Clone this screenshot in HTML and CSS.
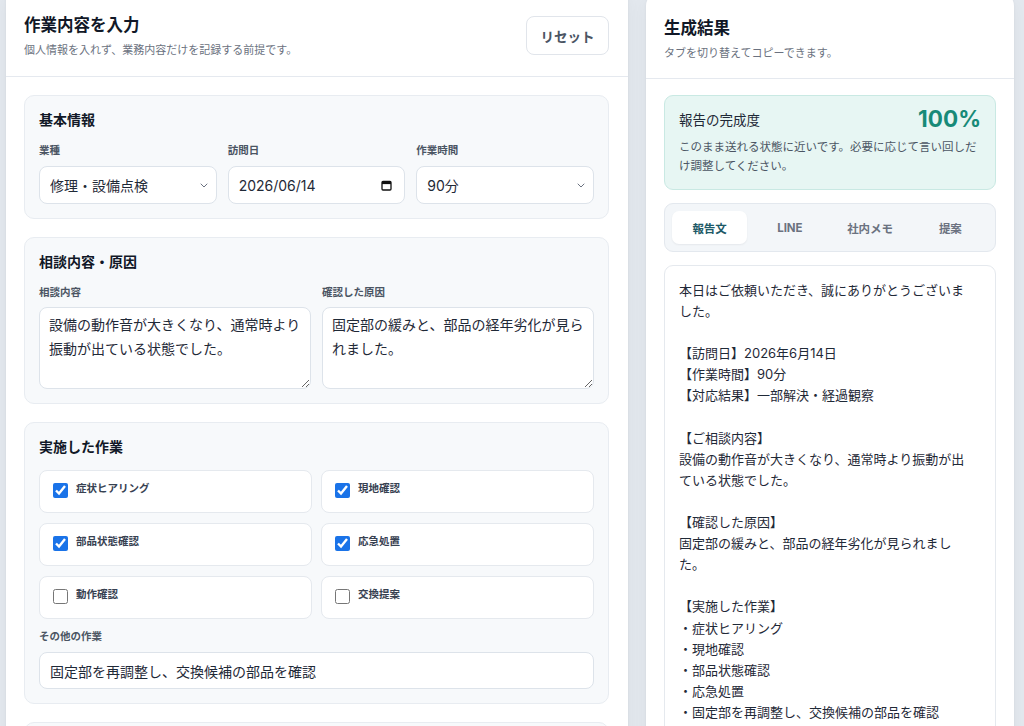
FILE: index.html
```html
<!DOCTYPE html>
<html lang="ja">
<head>
    <meta charset="UTF-8">
    <meta name="viewport" content="width=device-width, initial-scale=1.0">
    <title>作業報告ジェネレーター</title>
    <link rel="stylesheet" href="styles.css">
</head>
<body>

    <main class="layout">
        <section class="panel panel-input">
            <header class="panel-head">
                <div>
                    <h1>作業内容を入力</h1>
                    <p>個人情報を入れず、業務内容だけを記録する前提です。</p>
                </div>
                <button class="btn-reset">リセット</button>
            </header>

            <div class="panel-body">
                <div class="card">
                    <h2>基本情報</h2>
                    <div class="grid-3">
                        <div class="field">
                            <span class="field-label">業種</span>
                            <div class="select-wrap">
                                <select>
                                    <option>修理・設備点検</option>
                                </select>
                                <svg class="chevron" width="8" height="5" viewBox="0 0 8 5"><path d="M1 1l3 3 3-3" fill="none" stroke="#6b7280" stroke-width="1" stroke-linecap="round" stroke-linejoin="round"/></svg>
                            </div>
                        </div>
                        <div class="field">
                            <span class="field-label">訪問日</span>
                            <div class="select-wrap">
                                <input type="text" class="input date-input" value="2026/06/14">
                                <svg class="calendar" width="11" height="11" viewBox="0 0 11 11"><rect x="1" y="1.5" width="9" height="8.5" rx="1" fill="none" stroke="#111" stroke-width="1.3"/><rect x="1" y="1.5" width="9" height="2.6" fill="#111"/></svg>
                            </div>
                        </div>
                        <div class="field">
                            <span class="field-label">作業時間</span>
                            <div class="select-wrap">
                                <select>
                                    <option>90分</option>
                                </select>
                                <svg class="chevron" width="8" height="5" viewBox="0 0 8 5"><path d="M1 1l3 3 3-3" fill="none" stroke="#6b7280" stroke-width="1" stroke-linecap="round" stroke-linejoin="round"/></svg>
                            </div>
                        </div>
                    </div>
                </div>

                <div class="card">
                    <h2>相談内容・原因</h2>
                    <div class="grid-2">
                        <div class="field">
                            <span class="field-label">相談内容</span>
                            <textarea>設備の動作音が大きくなり、通常時より振動が出ている状態でした。</textarea>
                        </div>
                        <div class="field">
                            <span class="field-label">確認した原因</span>
                            <textarea>固定部の緩みと、部品の経年劣化が見られました。</textarea>
                        </div>
                    </div>
                </div>

                <div class="card">
                    <h2>実施した作業</h2>
                    <div class="checks">
                        <label class="check"><input type="checkbox" checked><span>症状ヒアリング</span></label>
                        <label class="check"><input type="checkbox" checked><span>現地確認</span></label>
                        <label class="check"><input type="checkbox" checked><span>部品状態確認</span></label>
                        <label class="check"><input type="checkbox" checked><span>応急処置</span></label>
                        <label class="check"><input type="checkbox"><span>動作確認</span></label>
                        <label class="check"><input type="checkbox"><span>交換提案</span></label>
                    </div>
                    <div class="field field-other">
                        <span class="field-label">その他の作業</span>
                        <input type="text" class="input" value="固定部を再調整し、交換候補の部品を確認">
                    </div>
                </div>

                <div class="card card-next"></div>
            </div>
        </section>

        <aside class="panel panel-output">
            <header class="panel-head">
                <div>
                    <h1>生成結果</h1>
                    <p>タブを切り替えてコピーできます。</p>
                </div>
            </header>

            <div class="panel-body">
                <div class="score">
                    <div class="score-row">
                        <span>報告の完成度</span>
                        <strong>100%</strong>
                    </div>
                    <p>このまま送れる状態に近いです。必要に応じて言い回しだけ調整してください。</p>
                </div>

                <div class="tabs">
                    <button class="tab active">報告文</button>
                    <button class="tab">LINE</button>
                    <button class="tab">社内メモ</button>
                    <button class="tab">提案</button>
                </div>

                <div class="output">本日はご依頼いただき、誠にありがとうございました。

【訪問日】2026年6月14日
【作業時間】90分
【対応結果】一部解決・経過観察

【ご相談内容】
設備の動作音が大きくなり、通常時より振動が出ている状態でした。

【確認した原因】
固定部の緩みと、部品の経年劣化が見られました。

【実施した作業】
・症状ヒアリング
・現地確認
・部品状態確認
・応急処置
・固定部を再調整し、交換候補の部品を確認</div>
            </div>
        </aside>
    </main>

</body>
</html>
```

FILE: styles.css
```css
body {
    margin: 0;
    height: 726px;
    overflow: hidden;
    background: #e4e9ef;
    font-family: "Inter", "Noto Sans CJK JP", sans-serif;
    color: #1f2937;
}

.layout {
    display: grid;
    grid-template-columns: 622px 368px;
    gap: 18px;
    padding: 0 10px 0 6px;
    margin-top: -14px;
    align-items: start;
}

.panel {
    background: #ffffff;
    border-radius: 14px;
    box-shadow: 0 1px 3px rgba(15, 23, 42, 0.05), 0 6px 20px rgba(15, 23, 42, 0.05);
}

.panel-head {
    display: flex;
    justify-content: space-between;
    align-items: flex-start;
    padding: 26px 19px 18px 18px;
    border-bottom: 1px solid #e5e9ef;
}

.panel-head h1 {
    margin: 0;
    font-size: 16.5px;
    line-height: 26px;
    font-weight: 700;
    color: #111827;
}

.panel-head p {
    margin: 4px 0 0;
    font-size: 11px;
    line-height: 16px;
    color: #6b7280;
}

.btn-reset {
    margin-top: 4px;
    width: 83px;
    height: 39px;
    background: #ffffff;
    border: 1px solid #e1e5eb;
    border-radius: 8px;
    font-family: inherit;
    font-size: 13.5px;
    font-weight: 700;
    color: #4b5563;
}

.panel-input .panel-body {
    display: flex;
    flex-direction: column;
    gap: 18px;
    padding: 18px 19px 18px 18px;
}

.card {
    background: #f7f9fb;
    border: 1px solid #e8ecf1;
    border-radius: 10px;
    padding: 14px;
}

.card h2 {
    margin: 0 0 14px;
    font-size: 14px;
    line-height: 20px;
    font-weight: 700;
    color: #111827;
}

.card-next {
    height: 120px;
}

.grid-3 {
    display: grid;
    grid-template-columns: repeat(3, 1fr);
    gap: 11px;
}

.grid-2 {
    display: grid;
    grid-template-columns: repeat(2, 1fr);
    gap: 11px;
}

.field-label {
    display: block;
    margin-bottom: 8px;
    font-size: 10.5px;
    line-height: 14px;
    font-weight: 700;
    color: #4b5563;
}

.grid-2 .field-label {
    margin-bottom: 7px;
}

.select-wrap {
    position: relative;
}

.select-wrap select,
.input {
    display: block;
    width: 100%;
    height: 38px;
    box-sizing: border-box;
    padding: 0 28px 0 10px;
    background: #ffffff;
    border: 1px solid #dde3ea;
    border-radius: 8px;
    font-family: inherit;
    font-size: 14px;
    color: #1f2937;
    appearance: none;
    outline: none;
}

.chevron {
    position: absolute;
    right: 9px;
    top: 17px;
}

.calendar {
    position: absolute;
    right: 13px;
    top: 14px;
}

textarea {
    display: block;
    width: 100%;
    height: 82px;
    box-sizing: border-box;
    padding: 5px 8px 5px 9px;
    background: #ffffff;
    border: 1px solid #dde3ea;
    border-radius: 8px;
    font-family: inherit;
    font-size: 14px;
    line-height: 24px;
    color: #1f2937;
    resize: vertical;
    outline: none;
}

.checks {
    display: grid;
    grid-template-columns: repeat(2, 1fr);
    gap: 10px 9px;
    margin-top: -1px;
}

.check {
    display: flex;
    align-items: flex-start;
    gap: 8px;
    height: 43px;
    box-sizing: border-box;
    padding: 12px 13px;
    background: #ffffff;
    border: 1px solid #e5e9ee;
    border-radius: 8px;
}

.check input {
    width: 15px;
    height: 15px;
    margin: 0;
    accent-color: #1a73e8;
}

.check span {
    font-size: 10.5px;
    line-height: 12px;
    font-weight: 700;
    color: #374151;
}

.field-other {
    margin-top: 11px;
}

.field-other .input {
    height: 37px;
}

.panel-output {
    margin-top: 6px;
}

.panel-output .panel-head {
    padding: 23px 18px 17px;
}

.panel-output .panel-body {
    padding: 16px 18px;
}

.score {
    background: #e7f6f3;
    border: 1px solid #c9e9e3;
    border-radius: 9px;
    padding: 10px 14px 13px;
}

.score-row {
    display: flex;
    justify-content: space-between;
    align-items: center;
    height: 26px;
    font-size: 13.5px;
    color: #1f2937;
}

.score-row strong {
    font-size: 22.5px;
    line-height: 26px;
    font-weight: 700;
    color: #178a78;
}

.score p {
    margin: 6px 0 0;
    font-size: 11.5px;
    line-height: 19px;
    color: #4b5563;
}

.tabs {
    display: grid;
    grid-template-columns: repeat(4, 1fr);
    gap: 5px;
    margin-top: 13px;
    padding: 7px;
    background: #f3f6f9;
    border: 1px solid #e3e8ee;
    border-radius: 9px;
}

.tab {
    height: 33px;
    background: transparent;
    border: none;
    border-radius: 7px;
    font-family: inherit;
    font-size: 11.5px;
    font-weight: 700;
    color: #6b7280;
}

.tab.active {
    background: #ffffff;
    color: #1e5a68;
    box-shadow: 0 1px 2px rgba(15, 23, 42, 0.06);
}

.output {
    margin-top: 13px;
    padding: 14px 18px 40px 14px;
    border: 1px solid #e5e9ee;
    border-radius: 9px;
    font-size: 13px;
    line-height: 21.1px;
    color: #1f2937;
    white-space: pre-wrap;
}
```
